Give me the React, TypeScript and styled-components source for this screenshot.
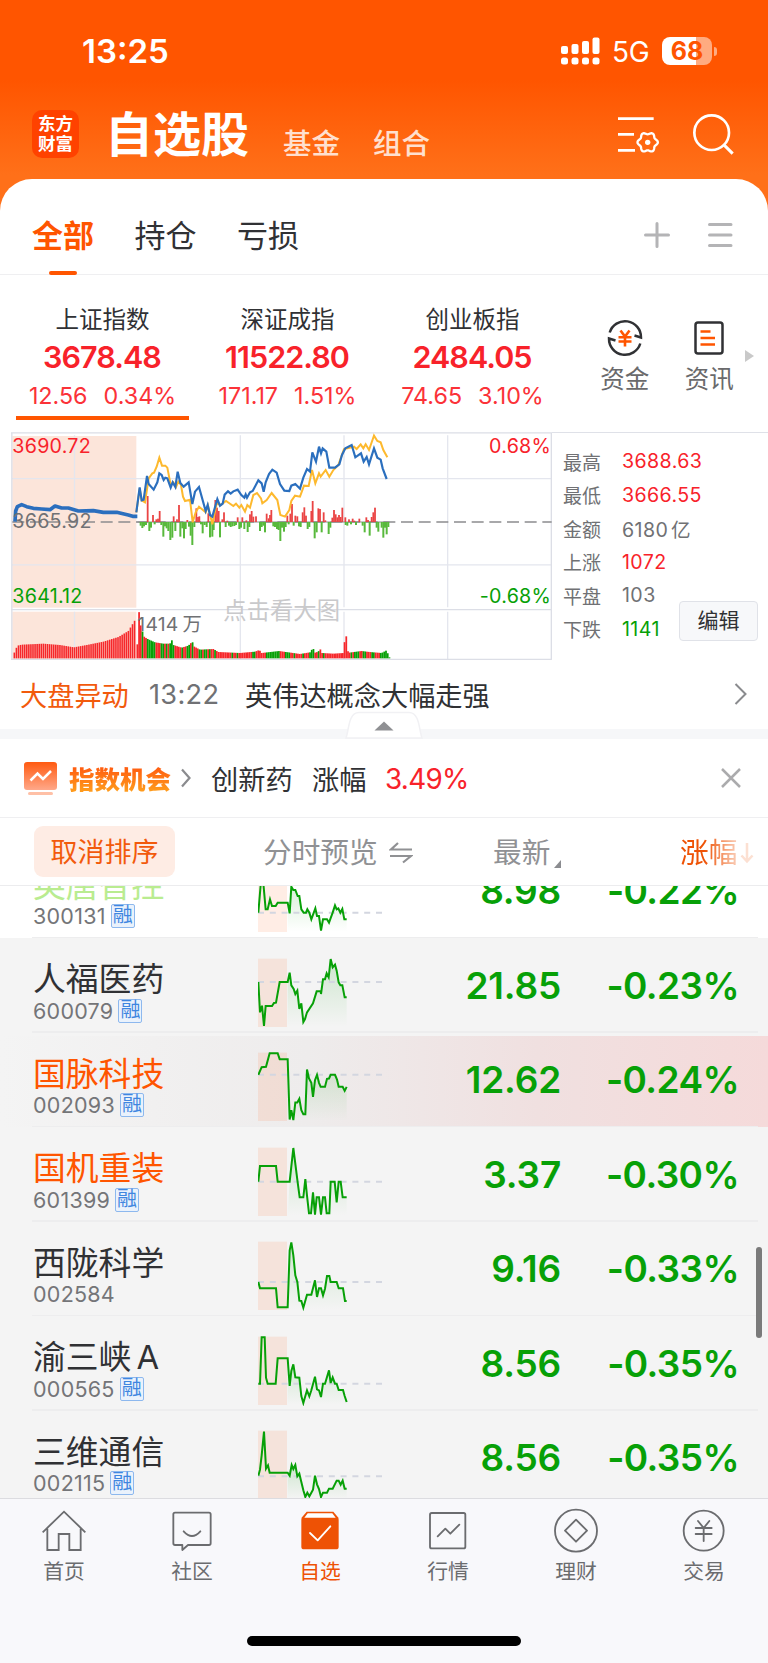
import React from "react";
import styled, { createGlobalStyle } from "styled-components";

const RED = "#f8222a";
const GREEN = "#07a007";
const ORANGE = "#ff5500";

const Global = createGlobalStyle`
  * { box-sizing: border-box; }
  body { margin: 0; background: #fff; }
  svg { display: block; flex: none; }
`;

const Screen = styled.div`
  width: 768px;
  height: 1663px;
  overflow: hidden;
  display: flex;
  flex-direction: column;
  background: linear-gradient(#ff5500 0, #ff5500 80px, #ff7019 175px, #ff7019 240px, #fff 240px);
  font-family: Inter, "Noto Sans CJK SC", sans-serif;
  color: #303134;
  white-space: nowrap;
`;

/* ---------- status bar ---------- */
const StatusBar = styled.div`
  height: 102px;
  padding: 0 51px 0 82px;
  display: flex;
  align-items: center;
  color: #fff;
`;
const Clock = styled.span`
  font-size: 33px;
  font-weight: 600;
  letter-spacing: 0;
  flex: 1;
`;
const Network = styled.span`
  font-size: 28px;
  margin: 2px 12px 0 12px;
  width: 38px;
  letter-spacing: -0.3px;
`;
const Battery = styled.div`
  width: 50px;
  height: 28px;
  border-radius: 8px;
  background: linear-gradient(90deg, #fff 68%, #ffab80 68%);
  color: ${ORANGE};
  font-size: 25px;
  font-weight: 700;
  line-height: 28px;
  text-align: center;
`;
const BatteryNub = styled.div`
  width: 3px;
  height: 9px;
  margin-left: 2px;
  border-radius: 0 4px 4px 0;
  background: #ffab80;
`;

/* ---------- title bar ---------- */
const TitleBar = styled.div`
  height: 77px;
  padding: 0 34px 0 32px;
  display: flex;
  align-items: flex-start;
  color: #fff;
`;
const Logo = styled.div`
  width: 47px;
  height: 48px;
  margin: 8px 26px 0 0;
  border-radius: 10px;
  background: #ff4200;
  font-family: "Noto Sans CJK SC", sans-serif;
  font-size: 17.5px;
  line-height: 20px;
  font-weight: 700;
  text-align: center;
  padding-top: 3px;
`;
const Title = styled.h1`
  margin: 2px 0 0;
  width: 178px;
  font-size: 48px;
  line-height: 62px;
  font-weight: 700;
`;
const SubTitle = styled.span`
  width: 90px;
  padding-top: 23px;
  font-size: 28.5px;
  line-height: 38px;
  font-weight: 500;
  color: #ffe0cf;
`;
const TitleActions = styled.div`
  margin-left: auto;
  display: flex;
  gap: 32px;
  padding-top: 12px;
`;

/* ---------- group tabs ---------- */
const GroupBar = styled.div`
  height: 96px;
  padding: 0 35px 0 32px;
  display: flex;
  background: #fff;
  border-radius: 32px 32px 0 0;
  border-bottom: 1.5px solid #efeff1;
`;
const GroupTab = styled.div<{ $on?: boolean }>`
  width: 102.5px;
  padding: 36px 0 0;
  font-size: 31px;
  line-height: 42px;
  font-weight: ${(p) => (p.$on ? 700 : 400)};
  color: ${(p) => (p.$on ? ORANGE : "#303134")};
  &::after {
    content: "";
    display: ${(p) => (p.$on ? "block" : "none")};
    width: 28px;
    height: 4px;
    margin: 14px 0 0 17px;
    background: ${ORANGE};
    border-radius: 2px;
  }
`;
const GroupActions = styled.div`
  margin-left: auto;
  display: flex;
  gap: 38px;
  padding-top: 43px;
`;

/* ---------- indices ---------- */
const IndexBar = styled.div`
  height: 157px;
  background: #fff;
  display: flex;
  padding-left: 16px;
`;
const IndexCell = styled.div<{ $on?: boolean }>`
  width: 173px;
  height: 145px;
  margin-right: 12px;
  padding-top: 29px;
  display: flex;
  flex-direction: column;
  align-items: center;
  border-bottom: 4px solid ${(p) => (p.$on ? ORANGE : "transparent")};
`;
const IndexName = styled.div`
  font-size: 23.5px;
  line-height: 32px;
`;
const IndexValue = styled.div`
  margin-top: 3px;
  font-size: 30.5px;
  line-height: 36px;
  font-weight: 600;
  letter-spacing: -0.95px;
  padding-right: 1px;
  color: ${RED};
`;
const IndexChange = styled.div`
  margin-top: 6px;
  display: flex;
  gap: 16px;
  font-size: 23.3px;
  line-height: 30px;
  color: #fb3238;
`;
const Shortcut = styled.div`
  width: 84.5px;
  padding-top: 44px;
  display: flex;
  flex-direction: column;
  align-items: center;
  gap: 4px;
  font-size: 24.5px;
  line-height: 36px;
  color: #6a6a6c;
`;
const ShortcutGroup = styled.div`
  display: flex;
  margin-left: 11.5px;
`;
const MoreArrow = styled.div`
  margin: 75px 0 0 -7px;
  width: 0;
  height: 0;
  border-left: 9px solid #c9c9c9;
  border-top: 6px solid transparent;
  border-bottom: 6px solid transparent;
`;

/* ---------- chart ---------- */
const ChartRow = styled.div`
  height: 228px;
  background: #fff;
  display: flex;
  padding-left: 11px;
`;
const Stats = styled.div`
  flex: 1;
  border-top: 1.5px solid #dfe1e8;
  padding: 11.5px 0 0 11px;
  position: relative;
`;
const StatLine = styled.div`
  height: 33.5px;
  display: flex;
  align-items: center;
`;
const StatLabel = styled.span`
  width: 59px;
  font-size: 19px;
  color: #707174;
`;
const StatValue = styled.span<{ $c?: string }>`
  font-size: 19.6px;
  letter-spacing: 0.4px;
  word-spacing: -3px;
  color: ${(p) => p.$c || "#707174"};
`;
const EditButton = styled.div`
  position: absolute;
  left: 127px;
  top: 168px;
  width: 79px;
  height: 40px;
  border: 1.5px solid #e0e2e8;
  border-radius: 4px;
  background: #f7f8fa;
  font-size: 21px;
  line-height: 37px;
  text-align: center;
`;

/* ---------- market alert ---------- */
const AlertRow = styled.div`
  height: 69px;
  background: #fff;
  padding: 0 21px 1px 20px;
  display: flex;
  align-items: center;
  font-size: 27.2px;
`;
const AlertTag = styled.span`
  width: 129px;
  color: #f25a0c;
`;
const AlertTime = styled.span`
  width: 96px;
  color: #707174;
  letter-spacing: 0.3px;
`;
const AlertText = styled.span`
  flex: 1;
`;
const Band = styled.div`
  height: 10px;
  background: #f6f7f9;
  position: relative;
`;
const Collapse = styled.svg`
  position: absolute;
  left: 345px;
  top: -18px;
`;

/* ---------- opportunity strip ---------- */
const HintRow = styled.div`
  height: 79px;
  background: #fff;
  border-bottom: 1.5px solid #efeff1;
  padding: 0 27px 1px 24px;
  display: flex;
  align-items: center;
  font-size: 27.2px;
`;
const HintTag = styled.span`
  margin: 0 9px 0 12px;
  width: 103px;
  font-size: 25.5px;
  font-weight: 900;
  background: linear-gradient(#ff5a10 20%, #ff9a1c 85%);
  -webkit-background-clip: text;
  background-clip: text;
  color: transparent;
`;
const HintName = styled.span`
  margin-left: 20px;
  width: 101px;
`;
const HintLabel = styled.span`
  width: 73px;
`;
const HintValue = styled.span`
  flex: 1;
  font-size: 27.8px;
  letter-spacing: -0.7px;
  padding-top: 2px;
  color: ${RED};
`;

/* ---------- table head ---------- */
const HeadRow = styled.div`
  height: 68px;
  background: #fff;
  border-bottom: 1.5px solid #ececee;
  padding-left: 34px;
  display: flex;
  align-items: center;
  font-size: 28.7px;
  line-height: 40px;
  color: #909194;
`;
const CancelSort = styled.div`
  width: 141px;
  height: 51px;
  border-radius: 9px;
  background: #feece4;
  color: #f25a0c;
  font-size: 27px;
  line-height: 51px;
  padding-top: 1px;
  text-align: center;
`;
const PreviewHead = styled.div`
  width: 318px;
  padding-left: 88px;
  margin-top: 2px;
  display: flex;
  align-items: center;
  gap: 11px;
`;
const LatestHead = styled.div`
  width: 187px;
  margin-top: 2px;
  display: flex;
  align-items: flex-end;
  gap: 4px;
`;
const SortCorner = styled.div`
  width: 0;
  height: 0;
  margin-bottom: 5px;
  border-left: 7px solid transparent;
  border-bottom: 8px solid #8b8c90;
`;
const ChangeHead = styled.div`
  display: flex;
  margin-top: 2px;
  align-items: center;
  gap: 3px;
  color: #ee5205;
  -webkit-mask-image: linear-gradient(90deg, #000 24px, rgba(0, 0, 0, 0.18) 62px);
  mask-image: linear-gradient(90deg, #000 24px, rgba(0, 0, 0, 0.18) 62px);
`;

/* ---------- stock list ---------- */
const ListView = styled.div`
  height: 612px;
  overflow: hidden;
  position: relative;
  background: #f4f4f4;
`;
const ListBody = styled.div`
  margin-top: -42.5px;
`;
const StockRow = styled.div<{ $tone?: "plain" | "flash" }>`
  height: 94.5px;
  position: relative;
  display: flex;
  background: ${(p) =>
    p.$tone === "plain"
      ? "#fff"
      : p.$tone === "flash"
        ? "linear-gradient(90deg, #f4f4f4 0%, #eeecec 40%, #f0e0e0 70%, #f5dada 100%) 0 3px no-repeat"
        : "#f4f4f4"};
  &::after {
    content: "";
    position: absolute;
    left: 32px;
    right: 10px;
    bottom: 0;
    height: 1.5px;
    background: #ededee;
  }
`;
const StockInfo = styled.div`
  width: 258px;
  padding: 19px 0 0 33px;
`;
const StockName = styled.div<{ $c?: string }>`
  font-size: 32.8px;
  line-height: 44px;
  word-spacing: -4px;
  color: ${(p) => p.$c || "#303134"};
`;
const StockMeta = styled.div`
  display: flex;
  align-items: center;
  gap: 5px;
  height: 24px;
  margin-top: -2.5px;
  font-size: 21.5px;
  letter-spacing: 0.25px;
  color: #747578;
`;
const MarginBadge = styled.span`
  width: 24px;
  height: 24px;
  border: 1.5px solid #8db8ee;
  border-radius: 2px;
  background: #eaf2fc;
  color: #3f86e0;
  font-size: 20px;
  line-height: 20px;
  letter-spacing: 0;
  text-align: center;
`;
const SparkCell = styled.div`
  width: 124px;
  padding-top: 19.5px;
`;
const Figure = styled.div<{ $w: number; $tight?: boolean }>`
  width: ${(p) => p.$w}px;
  padding-top: 25.5px;
  text-align: right;
  font-size: 37px;
  line-height: 44px;
  font-weight: 600;
  letter-spacing: ${(p) => (p.$tight ? "-0.6px" : "-0.2px")};
  color: ${GREEN};
`;
const ScrollThumb = styled.div`
  position: absolute;
  left: 756px;
  top: 361px;
  width: 6px;
  height: 91px;
  border-radius: 3px;
  background: #7a7a7a;
`;

/* ---------- bottom navigation ---------- */
const NavBar = styled.div`
  flex: 1;
  background: #f8f8fb;
  border-top: 1.5px solid #dcdce0;
  display: flex;
  flex-direction: column;
  align-items: center;
`;
const NavItems = styled.div`
  width: 768px;
  height: 137px;
  display: flex;
`;
const NavItem = styled.div<{ $on?: boolean }>`
  width: 128px;
  padding-top: 7px;
  display: flex;
  flex-direction: column;
  align-items: center;
  gap: 3px;
  font-size: 20.8px;
  line-height: 30px;
  color: ${(p) => (p.$on ? "#ee5205" : "#6b6c6f")};
`;
const HomeIndicator = styled.div`
  width: 274px;
  height: 10px;
  border-radius: 5px;
  background: #000;
`;

/* ---------- chart data ---------- */
const PRE =
  "45,290 47,258 52,245 65,239 80,245 100,250 125,252 150,254 165,243 185,249 205,249 235,258 280,257 310,262 350,262 385,270 398,274 412,274";
const BLUE =
  "409,262 419,187 425,226 431,224 441,153 446,177 461,194 472,172 478,145 485,150 491,165 496,158 502,160 512,188 518,172 526,186 533,140 541,174 551,185 566,172 577,237 585,200 597,186 617,258 623,240 630,270 637,275 652,222 660,242 668,236 674,209 684,199 692,206 700,199 713,194 724,210 733,218 737,208 741,218 750,202 758,198 775,166 785,175 791,200 797,172 807,147 817,134 830,143 840,177 853,197 868,198 874,182 886,177 900,191 910,158 921,132 930,140 937,82 948,110 957,65 963,85 968,70 979,80 988,128 1005,128 1018,118 1026,90 1036,70 1055,60 1066,97 1083,85 1091,110 1100,96 1107,118 1122,70 1132,98 1142,104 1148,130 1160,162";
const GOLD =
  "409,262 419,190 425,226 435,232 446,160 457,145 462,143 470,125 478,98 486,122 496,122 502,128 512,180 520,172 528,186 535,170 543,180 549,215 555,228 570,224 578,292 587,262 597,245 617,262 624,242 637,298 650,235 662,240 678,228 700,243 708,236 718,248 724,240 735,260 742,240 750,248 760,210 771,204 783,220 787,235 800,225 815,204 832,225 841,270 855,275 868,255 874,228 885,212 900,215 912,182 926,183 936,135 946,175 957,145 962,155 977,135 988,155 1000,135 1015,120 1032,72 1062,65 1070,72 1082,58 1090,70 1097,58 1107,75 1122,32 1132,48 1142,52 1150,75 1162,97";

const UP: number[][] = [
  [443, 213], [459, 270], [469, 283], [474, 281], [479, 258], [521, 274], [531, 283], [537, 240], [562, 285],
  [589, 250], [594, 276], [598, 274], [625, 265], [646, 225], [651, 248], [656, 258], [667, 283], [672, 262],
  [682, 287], [713, 277], [727, 277], [739, 286], [750, 268], [755, 258], [760, 275], [768, 274], [800, 266],
  [806, 280], [810, 270], [814, 255], [862, 272], [871, 266], [876, 237], [886, 272], [892, 274], [908, 262],
  [913, 247], [918, 272], [934, 258], [938, 228], [955, 250], [960, 252], [971, 262], [976, 286], [997, 278],
  [1002, 255], [1007, 268], [1012, 277], [1017, 270], [1022, 276], [1027, 248], [1036, 277], [1047, 283],
  [1058, 281], [1063, 287], [1078, 281], [1099, 277], [1104, 285], [1115, 276], [1120, 262], [1125, 248],
];
const DOWN: number[][] = [
  [422, 302], [427, 309], [432, 304], [438, 300], [448, 318], [453, 308], [464, 298], [484, 300], [490, 335],
  [495, 304], [500, 310], [505, 318], [511, 345], [517, 338], [526, 318], [541, 335], [547, 310], [552, 340],
  [557, 312], [567, 305], [572, 332], [577, 360], [583, 306], [603, 298], [608, 325], [614, 300], [620, 306],
  [630, 337], [637, 335], [641, 315], [660, 337], [677, 306], [687, 302], [692, 306], [697, 304], [703, 303],
  [708, 300], [718, 312], [723, 308], [733, 312], [743, 321], [748, 306], [780, 318], [785, 306], [790, 302],
  [795, 322], [820, 304], [825, 306], [831, 312], [836, 315], [841, 348], [846, 308], [852, 320], [857, 306],
  [866, 298], [881, 302], [897, 304], [902, 306], [923, 312], [928, 306], [944, 340], [950, 322], [965, 322],
  [986, 327], [991, 308], [1037, 300], [1042, 302], [1053, 298], [1068, 300], [1088, 302], [1094, 322],
  [1109, 332], [1130, 308], [1135, 320], [1145, 308], [1150, 338], [1155, 308], [1160, 328], [1165, 306],
];

const PRE_PROFILE: number[][] = [[42, 685], [52, 662], [65, 659], [130, 656], [180, 660], [222, 667], [260, 660], [310, 650], [355, 636], [385, 618], [404, 587]];
const VOL_PROFILE: number[][] = [
  [412, 658], [417, 560], [422, 600], [427, 618], [433, 636], [445, 643], [465, 652], [490, 656], [510, 656], [515, 644],
  [520, 660], [545, 668], [565, 662], [577, 650], [583, 665], [600, 674], [640, 672], [655, 681], [720, 684], [765, 680],
  [778, 675], [785, 684], [838, 678], [850, 680], [880, 684], [900, 687], [930, 682], [939, 669], [945, 683], [955, 680], [960, 671],
  [966, 684], [1000, 686], [1031, 684], [1035, 634], [1039, 634], [1042, 676], [1047, 683], [1085, 678], [1100, 680], [1120, 682], [1145, 684],
  [1158, 677], [1162, 682], [1168, 697],
];
const sample = (profile: number[][], x: number) => {
  for (let i = 1; i < profile.length; i++) {
    const [x1, y1] = profile[i];
    const [x0, y0] = profile[i - 1];
    if (x <= x1) return y0 + ((y1 - y0) * Math.max(0, x - x0)) / (x1 - x0);
  }
  return profile[profile.length - 1][1];
};
const PRE_BARS = Array.from({ length: 59 }, (_, i) => 43 + i * 6.22);
const VOL_BARS = Array.from({ length: 147 }, (_, i) => 412 + i * 5.18);
const VOL_SIDE =
  "rrrgrrgggg" + "grrrggrgrg" + "ggrrrrgrrg" + "grgrrrggrg" + "grgrrgrrrr" + "rrrrrgrrgr" + "rrrrrrrggr" +
  "rrrrrggggg" + "gggrrrgggr" + "rgrrrrgrrr" + "gggrrgrrgr" + "rrrrrrrrrr" + "rrrrgrgggr" + "rggrrrggrr" + "rggggggr";

function IndexChart() {
  return (
    <svg width="541" height="228" viewBox="33 21 1623 684" fontFamily="Inter, 'Noto Sans CJK SC', sans-serif">
      <rect x="37" y="33" width="372" height="515" fill="#fce5da" />
      <rect x="37" y="560" width="372" height="142" fill="#fce5da" />
      <g stroke="#e4e6ee" strokeWidth="4" fill="none">
        <path d="M36 161H1655M36 419.500H1655M223.500 31V547M721 31V547M1032 31V547M1343 31V547M223.500 560V702M721 560V702M1032 560V702M1343 560V702" />
        <path d="M33 23.500H1656M33 554H1655M33 703H1655M35.500 22V704M1654 22V704" stroke="#dcdee6" />
      </g>
      <text x="670" y="581" fontSize="70" fill="#c9c9cb">点击看大图</text>
      <path d="M37 291H1655" stroke="#8c8c8e" strokeWidth="4" strokeDasharray="36 17" />
      <path d="M412 291H1168" stroke="#8c8c8e" strokeWidth="3" />
      {UP.map(([x, y]) => (
        <rect key={x} x={x - 2.7} y={y} width="5.400" height={291 - y} fill="#ea4444" />
      ))}
      {DOWN.map(([x, y]) => (
        <rect key={x} x={x - 3} y="291" width="6" height={y - 291} fill="#58b93c" />
      ))}
      <polyline points={GOLD} fill="none" stroke="#fdb92e" strokeWidth="6" />
      <polyline points={BLUE} fill="none" stroke="#2b6fbe" strokeWidth="6.500" />
      <polyline points={PRE} fill="none" stroke="#2b6fbe" strokeWidth="11" strokeLinejoin="round" />
      {PRE_BARS.map((x) => (
        <rect key={x} x={x - 2.4} y={sample(PRE_PROFILE, x)} width="4.800" height={700 - sample(PRE_PROFILE, x)} fill="#f6272b" />
      ))}
      {VOL_BARS.map((x, i) => (
        <rect key={x} x={x - 2.6} y={sample(VOL_PROFILE, x)} width="5.300" height={700 - sample(VOL_PROFILE, x)} fill={VOL_SIDE[i] === "g" ? "#07a007" : "#f6272b"} />
      ))}
      <g fontSize="59" letterSpacing="0.7">
        <text x="37" y="85" fill={RED}>3690.72</text>
        <text x="37" y="309" fill="#707174">3665.92</text>
        <text x="37" y="533" fill={GREEN}>3641.12</text>
        <text x="1653" y="85" fill={RED} textAnchor="end">0.68%</text>
        <text x="1653" y="533" fill={GREEN} textAnchor="end">-0.68%</text>
        <text x="412" y="617" fill="#707174" fontSize="58" wordSpacing="-5">1414 万</text>
      </g>
    </svg>
  );
}

type Stock = {
  name: string;
  color?: string;
  code: string;
  margin?: boolean;
  price: string;
  pct: string;
  tone?: "plain" | "flash";
  top: number;
  mid: number;
  line: string;
};

const STOCKS: Stock[] = [
  {
    name: "英唐智控", color: "#b9ec90", code: "300131", margin: true, price: "8.98", pct: "-0.22%", tone: "plain", top: -111, mid: 98,
    line: "775,98 782,15 785,-20 790,10 797,88 803,88 810,58 816,78 827,78 833,68 863,68 869,100 874,20 880,30 886,30 893,48 898,48 904,88 911,98 918,98 922,88 928,98 934,118 946,85 951,108 957,108 963,152 969,118 981,118 987,128 998,98 1005,76 1010,88 1015,85 1021,98 1027,87 1033,118 1040,118",
  },
  {
    name: "人福医药", code: "600079", margin: true, price: "21.85", pct: "-0.23%", top: 172, mid: 304,
    line: "775,304 780,395 786,375 792,436 797,376 816,376 822,367 828,366 839,304 863,304 869,276 874,314 881,325 886,340 892,330 898,385 904,368 910,424 915,415 921,395 939,368 950,332 962,332 963,340 969,296 975,296 980,278 986,290 992,235 998,260 1005,252 1010,270 1016,305 1021,314 1027,314 1034,350 1040,350",
  },
  {
    name: "国脉科技", color: ORANGE, code: "002093", margin: true, price: "12.62", pct: "-0.24%", tone: "flash", top: 455.5, mid: 584,
    line: "775,584 785,561 798,560 809,519 833,519 839,537 863,537 869,718 874,690 880,720 886,667 892,667 898,656 904,690 910,702 916,702 921,568 927,595 934,608 939,650 945,600 951,584 957,608 962,620 975,620 981,596 987,595 992,584 1005,584 1011,598 1016,620 1028,620 1034,632 1040,620",
  },
  {
    name: "国机重装", color: ORANGE, code: "601399", margin: true, price: "3.37", pct: "-0.30%", top: 739, mid: 903,
    line: "775,903 780,856 828,856 833,903 869,903 880,802 893,905 899,950 910,950 916,895 921,945 927,998 933,998 939,935 945,1002 950,950 957,950 963,1002 969,950 975,950 980,998 988,998 992,903 1004,903 1010,965 1016,903 1022,903 1028,950 1040,950",
  },
  {
    name: "西陇科学", code: "002584", price: "9.16", pct: "-0.33%", top: 62, mid: 245,
    line: "775,245 780,264 828,264 833,321 863,321 869,150 874,126 880,165 886,225 892,245 898,301 904,302 910,322 921,283 934,283 945,240 951,290 957,264 963,264 969,285 975,265 981,227 988,227 992,245 1010,245 1016,264 1029,264 1035,302 1040,302",
  },
  {
    name: "渝三峡 A", code: "000565", margin: true, price: "8.56", pct: "-0.35%", top: 345, mid: 548,
    line: "775,548 780,548 785,409 794,409 798,530 803,548 827,548 833,472 863,472 869,555 874,510 880,490 886,529 898,530 904,585 910,606 921,568 928,586 934,568 945,527 951,565 957,568 963,588 969,548 975,548 987,508 992,546 998,529 1005,548 1010,548 1016,567 1029,567 1034,585 1040,603",
  },
  {
    name: "三维通信", code: "002115", margin: true, price: "8.56", pct: "-0.35%", top: 629, mid: 828,
    line: "775,826 780,808 785,765 792,694 798,805 804,795 809,817 863,817 869,826 875,794 880,806 886,794 892,828 898,820 904,845 910,870 916,890 922,877 928,888 934,877 939,868 945,826 951,852 957,866 963,890 969,877 981,877 987,865 998,865 1010,841 1016,841 1022,853 1028,841 1034,865 1040,865",
  },
];

function Sparkline({ stock }: { stock: Stock }) {
  const bottom = stock.top + 266;
  const id = "fade" + stock.code;
  const after = stock.line.split(" ").filter((p) => Number(p.split(",")[0]) >= 863).join(" ");
  return (
    <svg width="124" height="70" viewBox={`774 ${stock.top + 60} 372 210`}>
      <defs>
        <linearGradient id={id} x1="0" y1="0" x2="0" y2="1">
          <stop offset="0" stopColor={GREEN} stopOpacity="0.16" />
          <stop offset="1" stopColor={GREEN} stopOpacity="0" />
        </linearGradient>
      </defs>
      <rect x="774" y={stock.top + 62} width="87" height="205" fill="#ff6a28" fillOpacity="0.12" />
      <polygon points={`863,${bottom} ${after} 1040,${bottom}`} fill={`url(#${id})`} />
      <path d={`M774 ${stock.mid}H1146`} stroke="#d3d6e0" strokeWidth="6" strokeDasharray="18 17.400" />
      <polyline points={stock.line} fill="none" stroke={GREEN} strokeWidth="6" />
    </svg>
  );
}

const INDICES = [
  ["上证指数", "3678.48", "12.56", "0.34%"],
  ["深证成指", "11522.80", "171.17", "1.51%"],
  ["创业板指", "2484.05", "74.65", "3.10%"],
];
const STATS: [string, string, string?][] = [
  ["最高", "3688.63", RED],
  ["最低", "3666.55", RED],
  ["金额", "6180 亿"],
  ["上涨", "1072", RED],
  ["平盘", "103"],
  ["下跌", "1141", GREEN],
];

/* Six-lobed gear outline around (95, 85). */
const GEAR = Array.from({ length: 72 }, (_, i) => {
  const a = (i * Math.PI) / 36;
  const r = 27.3 + 3.2 * Math.cos(6 * a);
  return `${(95 + r * Math.cos(a)).toFixed(1)},${(85 + r * Math.sin(a)).toFixed(1)}`;
}).join(" ");

const NavIcon = ({ children }: { children: React.ReactNode }) => (
  <svg width="48" height="48" viewBox="0 0 144 144" fill="none" stroke="#6b6c6f" strokeWidth="5.500" strokeLinejoin="round" strokeLinecap="round">
    {children}
  </svg>
);

export default function App() {
  return (
    <Screen>
      <Global />
      <StatusBar>
        <Clock>13:25</Clock>
        <svg width="39" height="28" viewBox="0 0 39 28" fill="#fff">
          {[0, 10.5, 21, 31.5].map((x, i) => (
            <g key={x}>
              <rect x={x} y={[9, 7, 4, 0.5][i]} width="7" height={[8, 10, 13, 16.5][i]} rx="2" />
              <rect x={x} y="20.500" width="7" height="7" rx="2.500" />
            </g>
          ))}
        </svg>
        <Network>5G</Network>
        <Battery>68</Battery>
        <BatteryNub />
      </StatusBar>

      <TitleBar>
        <Logo>东方<br />财富</Logo>
        <Title>自选股</Title>
        <SubTitle>基金</SubTitle>
        <SubTitle>组合</SubTitle>
        <TitleActions>
          <svg width="43" height="42" viewBox="0 0 129 126" fill="none" stroke="#fff" strokeWidth="8">
            <path d="M6 14H113M6 61H54M6 109H57" />
            <polygon points={GEAR} strokeWidth="7" strokeLinejoin="round" />
            <circle cx="95" cy="85" r="8" fill="#fff" stroke="none" />
          </svg>
          <svg width="43" height="42" viewBox="0 0 129 126" fill="none" stroke="#fff" strokeWidth="8">
            <circle cx="62" cy="56" r="52" />
            <path d="M98 92L125 119" strokeWidth="9" />
          </svg>
        </TitleActions>
      </TitleBar>

      <GroupBar>
        <GroupTab $on>全部</GroupTab>
        <GroupTab>持仓</GroupTab>
        <GroupTab>亏损</GroupTab>
        <GroupActions>
          <svg width="26" height="26" stroke="#b4b4b6" strokeWidth="3" strokeLinecap="round">
            <path d="M13 1.500V24.500M1.500 13H24.500" />
          </svg>
          <svg width="25" height="26" stroke="#b4b4b6" strokeWidth="3" strokeLinecap="round">
            <path d="M1.500 2.500H23M1.500 13H23M1.500 23.500H23" />
          </svg>
        </GroupActions>
      </GroupBar>

      <IndexBar>
        {INDICES.map(([name, value, diff, pct], i) => (
          <IndexCell key={name} $on={i === 0}>
            <IndexName>{name}</IndexName>
            <IndexValue>{value}</IndexValue>
            <IndexChange>
              <span>{diff}</span>
              <span>{pct}</span>
            </IndexChange>
          </IndexCell>
        ))}
        <ShortcutGroup>
          <Shortcut>
            <svg width="38" height="38" viewBox="0 0 38 38" fill="none" stroke="#303134" strokeWidth="2.500">
              <path d="M3.700 13.500A16 16 0 0 1 35 18.500L28.500 16.500M34.300 24.500A16 16 0 0 1 3 19.500L9.500 21.500" />
              <path d="M14.500 11.500L19 17.500L23.500 11.500M12.500 18.200H25.500M12.500 22.500H25.500M19 17.500V27.500" stroke={ORANGE} strokeWidth="2.600" />
            </svg>
            资金
          </Shortcut>
          <Shortcut>
            <svg width="38" height="38" viewBox="0 0 38 38" fill="none" stroke="#303134" strokeWidth="2.500">
              <rect x="5.500" y="3.500" width="27" height="31" rx="2.500" />
              <path d="M10.500 12.500H20.500M10.500 19H25M10.500 25.500H25" stroke={ORANGE} strokeWidth="2.700" />
            </svg>
            资讯
          </Shortcut>
        </ShortcutGroup>
        <MoreArrow />
      </IndexBar>

      <ChartRow>
        <IndexChart />
        <Stats>
          {STATS.map(([label, value, color]) => (
            <StatLine key={label}>
              <StatLabel>{label}</StatLabel>
              <StatValue $c={color}>{value}</StatValue>
            </StatLine>
          ))}
          <EditButton>编辑</EditButton>
        </Stats>
      </ChartRow>

      <AlertRow>
        <AlertTag>大盘异动</AlertTag>
        <AlertTime>13:22</AlertTime>
        <AlertText>英伟达概念大幅走强</AlertText>
        <svg width="13" height="22" fill="none" stroke="#8a8b8e" strokeWidth="2">
          <path d="M1.500 1L11.500 11L1.500 21" />
        </svg>
      </AlertRow>
      <Band>
        <Collapse width="78" height="28" viewBox="0 0 78 28">
          <path d="M1 27C4 20 3 1.500 14 1.500H64C75 1.500 74 20 77 27Z" fill="#fff" stroke="#f1f1f4" strokeWidth="1.500" />
          <path d="M29.500 19.500L39 10.500L48.500 19.500Z" fill="#8f9093" />
        </Collapse>
      </Band>

      <HintRow>
        <svg width="33" height="34" viewBox="0 0 33 34">
          <defs>
            <linearGradient id="hint" x1="0" y1="0" x2="0" y2="1">
              <stop offset="0" stopColor="#ff5a10" />
              <stop offset="1" stopColor="#ffa88a" />
            </linearGradient>
          </defs>
          <rect y="1" width="33" height="28" rx="3" fill="url(#hint)" />
          <rect x="4" y="31" width="25" height="3" rx="1.500" fill="#ffc0a6" />
          <path d="M6.500 19.500L13.500 12.500L19 18L27 10" fill="none" stroke="#fff" strokeWidth="2.500" />
        </svg>
        <HintTag>指数机会</HintTag>
        <svg width="10" height="20" fill="none" stroke="#8a8b8e" strokeWidth="2.200">
          <path d="M1 1.500L8.500 10L1 18.500" />
        </svg>
        <HintName>创新药</HintName>
        <HintLabel>涨幅</HintLabel>
        <HintValue>3.49%</HintValue>
        <svg width="20" height="20" fill="none" stroke="#ababad" strokeWidth="2.500">
          <path d="M1 1L19 19M19 1L1 19" />
        </svg>
      </HintRow>

      <HeadRow>
        <CancelSort>取消排序</CancelSort>
        <PreviewHead>
          分时预览
          <svg width="24" height="22" fill="none" stroke="#909194" strokeWidth="2.200">
            <path d="M9 1L2 7.500H23M1 14H22L14 20.500" />
          </svg>
        </PreviewHead>
        <LatestHead>
          最新
          <SortCorner />
        </LatestHead>
        <ChangeHead>
          涨幅
          <svg width="14" height="22" fill="none" stroke="#ee5205" strokeWidth="2.500">
            <path d="M7 1V19M1.500 13.500L7 19.500L12.500 13.500" />
          </svg>
        </ChangeHead>
      </HeadRow>

      <ListView>
        <ListBody>
          {STOCKS.map((s) => (
            <StockRow key={s.code} $tone={s.tone}>
              <StockInfo>
                <StockName $c={s.color}>{s.name}</StockName>
                <StockMeta>
                  {s.code}
                  {s.margin && <MarginBadge>融</MarginBadge>}
                </StockMeta>
              </StockInfo>
              <SparkCell>
                <Sparkline stock={s} />
              </SparkCell>
              <Figure $w={179}>{s.price}</Figure>
              <Figure $w={178} $tight>{s.pct}</Figure>
            </StockRow>
          ))}
        </ListBody>
        <ScrollThumb />
      </ListView>

      <NavBar>
        <NavItems>
          <NavItem>
            <NavIcon>
              <path d="M8 79L72 17L136 79M22 68V132H56V84H88V132H122V68" strokeLinecap="butt" strokeLinejoin="miter" />
            </NavIcon>
            首页
          </NavItem>
          <NavItem>
            <NavIcon>
              <path d="M21 20H123Q128 20 128 25V112Q128 117 123 117H60L43 132V117H21Q16 117 16 112V25Q16 20 21 20ZM47 76Q72 104 97 76" />
            </NavIcon>
            社区
          </NavItem>
          <NavItem $on>
            <NavIcon>
              <path d="M32 17H112L126 34Q128 37 128 42V122Q128 130 120 130H24Q16 130 16 122V42Q16 37 18 34Z" fill="#ee5205" stroke="none" />
              <path d="M35 22H109L119 35H25Z" fill="#fff" stroke="none" />
              <path d="M42 81L65 103L103 61" stroke="#fff" />
            </NavIcon>
            自选
          </NavItem>
          <NavItem>
            <NavIcon>
              <rect x="18" y="21" width="106" height="106" rx="5" />
              <path d="M41 91L64 68L79 83L106 56" />
            </NavIcon>
            行情
          </NavItem>
          <NavItem>
            <NavIcon>
              <circle cx="72" cy="74" r="63" />
              <path d="M72 41L105 74L72 107L39 74Z" />
            </NavIcon>
            理财
          </NavItem>
          <NavItem>
            <NavIcon>
              <circle cx="71" cy="74" r="60" />
              <path d="M54 45L71 66L88 45M71 66V105M47 66H95M47 84H95" />
            </NavIcon>
            交易
          </NavItem>
        </NavItems>
        <HomeIndicator />
      </NavBar>
    </Screen>
  );
}
